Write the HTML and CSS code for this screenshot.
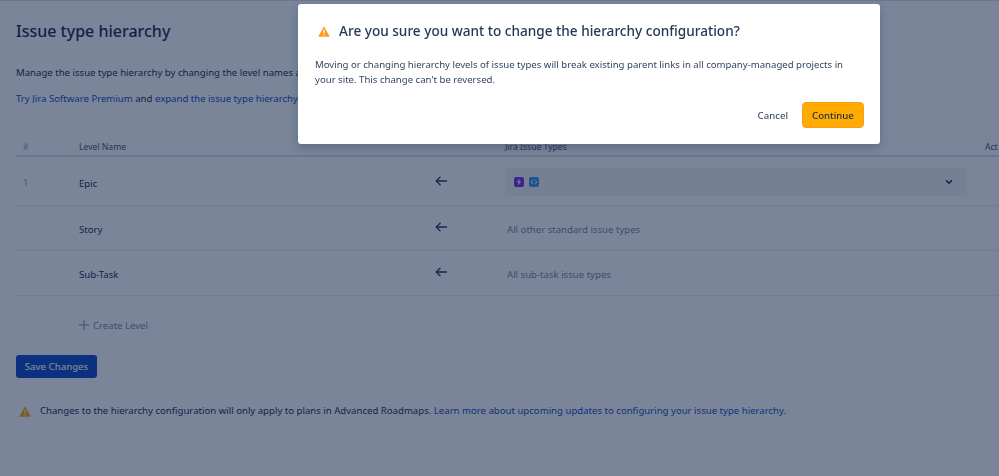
FILE: index.html
```html
<!DOCTYPE html>
<html lang="en">
<head>
  <meta charset="UTF-8">
  <meta name="viewport" content="width=device-width, initial-scale=1.0">
  <title>Issue type hierarchy</title>
  <link rel="stylesheet" href="styles.css">
</head>
<body>
  <div class="page">
    <h1 class="page-title">Issue type hierarchy</h1>
    <p class="intro">Manage the issue type hierarchy by changing the level names a</p>
    <p class="intro intro-second"><a href="#">Try Jira Software Premium</a> and <a href="#">expand the issue type hierarchy</a></p>

    <div class="table">
      <div class="row head">
        <span class="col-num">#</span>
        <span>Level Name</span>
        <span></span>
        <span>Jira Issue Types</span>
        <span class="col-actions">Act</span>
      </div>
      <div class="row row-epic">
        <span class="col-num">1</span>
        <span class="level">Epic</span>
        <svg class="arrow" width="12" height="12" viewBox="0 0 12 12"><path d="M12 6H1.500M5.500 1.800 1.200 6l4.300 4.200" fill="none" stroke="#253858" stroke-width="1.300"/></svg>
        <div class="type-select">
          <span class="badge badge-purple">
            <svg width="8" height="8" viewBox="0 0 8 8"><path d="M4.600 0.500 2 4.300h1.700L3.200 7.500l2.800-4H4.200z" fill="#fff"/></svg>
          </span>
          <span class="badge badge-blue">
            <svg width="8" height="8" viewBox="0 0 8 8"><path d="M3 2 1 4l2 2M5 2l2 2-2 2" fill="none" stroke="#fff" stroke-width="0.900"/></svg>
          </span>
          <svg class="chevron" width="8" height="6" viewBox="0 0 8 6"><path d="M1 1.200 4 4.200l3-3" fill="none" stroke="#172b4d" stroke-width="1.600"/></svg>
        </div>
        <span></span>
      </div>
      <div class="row">
        <span class="col-num"></span>
        <span class="level">Story</span>
        <svg class="arrow" width="12" height="12" viewBox="0 0 12 12"><path d="M12 6H1.500M5.500 1.800 1.200 6l4.300 4.200" fill="none" stroke="#253858" stroke-width="1.300"/></svg>
        <span class="col-types muted">All other standard issue types</span>
        <span></span>
      </div>
      <div class="row">
        <span class="col-num"></span>
        <span class="level">Sub-Task</span>
        <svg class="arrow" width="12" height="12" viewBox="0 0 12 12"><path d="M12 6H1.500M5.500 1.800 1.200 6l4.300 4.200" fill="none" stroke="#253858" stroke-width="1.300"/></svg>
        <span class="col-types muted">All sub-task issue types</span>
        <span></span>
      </div>
    </div>

    <div class="create-level">
      <svg width="10" height="10" viewBox="0 0 10 10"><path d="M5 0v10M0 5h10" stroke="#7a869a" stroke-width="1"/></svg>
      <span>Create Level</span>
    </div>

    <button class="btn-save">Save Changes</button>

    <div class="notice">
      <svg width="12" height="11" viewBox="0 0 12 11"><path d="M6 0.300 11.800 10.700H0.200z" fill="#ffab00"/><path d="M6 3.500v3.700M6 8.200v1.200" stroke="#fff" stroke-width="1.200"/></svg>
      <p>Changes to the hierarchy configuration will only apply to plans in Advanced Roadmaps. <a href="#">Learn more about upcoming updates to configuring your issue type hierarchy.</a></p>
    </div>
  </div>

  <div class="overlay">
    <div class="modal">
      <div class="modal-title">
        <svg width="12" height="11" viewBox="0 0 12 11"><path d="M6 0.300 11.800 10.700H0.200z" fill="#ff991f"/><path d="M6 3.500v3.700M6 8.200v1.200" stroke="#fff" stroke-width="1.200"/></svg>
        <h2>Are you sure you want to change the hierarchy configuration?</h2>
      </div>
      <p class="modal-body">Moving or changing hierarchy levels of issue types will break existing parent links in all company-managed projects in your site. This change can't be reversed.</p>
      <div class="modal-actions">
        <button class="btn-cancel">Cancel</button>
        <button class="btn-continue">Continue</button>
      </div>
    </div>
  </div>
</body>
</html>
```

FILE: styles.css
```css
/* Page underneath the dialog */
html, body {
  height: 100%;
}

body {
  margin: 0;
  background: #fff;
  color: #172b4d;
  font-family: "Noto Sans", sans-serif;
  font-size: 9.6px;
  overflow: hidden;
}

a {
  color: #1a46b8;
  text-decoration: none;
}

.page {
  padding: 19px 0 0 16px;
  border-top: 1px solid #dfe1e6;
}

.page-title {
  margin: 0;
  font-size: 16px;
  font-weight: 500;
  line-height: 22px;
}

.intro {
  margin: 23px 0 0;
  line-height: 16px;
  white-space: nowrap;
}

.intro-second {
  margin-top: 10px;
}

.table {
  margin-top: 33px;
}

.row {
  display: grid;
  grid-template-columns: 63px 346px 80px 462px 1fr;
  align-items: center;
  height: 44px;
  border-bottom: 1px solid #ebecf0;
  white-space: nowrap;
}

.head {
  height: 15px;
  align-items: start;
  border-bottom: 2px solid #dfe1e6;
  color: #42526e;
  font-size: 8.6px;
  line-height: 14px;
}

.row-epic {
  height: 46px;
  padding-top: 2px;
}

.col-num {
  padding-left: 7px;
  color: #97a0af;
}

.col-types {
  padding-left: 2px;
}

.col-actions {
  padding-left: 18px;
}

.muted {
  color: #7a869a;
  margin-top: 2px;
}

.level {
  margin-top: 2px;
  color: #172b4d;
}

.arrow {
  margin: -2px 0 0 10px;
}

.type-select {
  display: flex;
  align-items: center;
  gap: 5px;
  height: 28px;
  padding: 0 14px 0 9px;
  background: #f4f5f7;
  border-radius: 3px;
}

.badge {
  display: flex;
  align-items: center;
  justify-content: center;
  width: 10px;
  height: 10px;
  border-radius: 2px;
}

.badge-purple {
  background: #7a30e0;
}

.badge-blue {
  background: #3a9ae8;
}

.chevron {
  margin-left: auto;
}

.create-level {
  display: flex;
  align-items: center;
  gap: 4px;
  margin: 21px 0 0 63px;
  height: 16px;
  color: #7a869a;
}

.btn-save {
  display: block;
  width: 81px;
  height: 23px;
  margin-top: 22px;
  padding: 0;
  border: 0;
  border-radius: 3px;
  background: #0f47c8;
  color: #fff;
  font: 500 9.6px "Noto Sans", sans-serif;
  white-space: nowrap;
}

.notice {
  display: flex;
  align-items: center;
  gap: 9px;
  margin: 25px 0 0 3px;
}

.notice p {
  margin: 0;
  line-height: 16px;
  white-space: nowrap;
}

/* Dialog */
.overlay {
  position: fixed;
  inset: 0;
  display: flex;
  justify-content: flex-start;
  align-items: flex-start;
  padding: 4px 0 0 298px;
  background: rgba(9, 30, 66, 0.54);
}

.modal {
  box-sizing: border-box;
  width: 582px;
  height: 140px;
  padding: 17px 16px 16px 17px;
  background: #fff;
  border-radius: 3px;
  box-shadow: 0 4px 10px rgba(9, 30, 66, 0.25);
}

.modal-title {
  display: flex;
  align-items: center;
  gap: 9px;
  margin-left: 3px;
}

.modal-title h2 {
  margin: 0;
  color: #253858;
  font-size: 13.6px;
  font-weight: 500;
  line-height: 20px;
  white-space: nowrap;
}

.modal-body {
  margin: 16px 0 0;
  color: #344563;
  font-size: 9.6px;
  line-height: 15px;
}

.modal-actions {
  display: flex;
  justify-content: flex-end;
  align-items: center;
  gap: 14px;
  margin-top: 15px;
}

.btn-cancel {
  padding: 0;
  border: 0;
  background: none;
  color: #42526e;
  font: 500 9.6px "Noto Sans", sans-serif;
}

.btn-continue {
  width: 62px;
  height: 26px;
  padding: 0;
  border: 1px solid #ff991f;
  border-radius: 4px;
  background: #ffab00;
  color: #172b4d;
  font: 500 9.6px "Noto Sans", sans-serif;
}
```
